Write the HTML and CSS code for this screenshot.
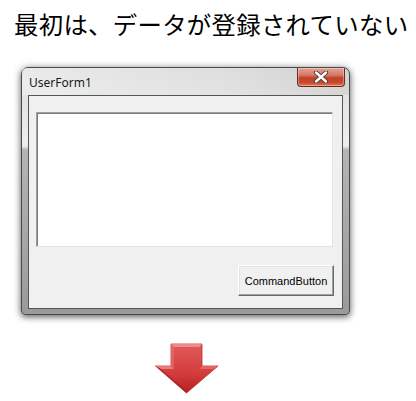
FILE: index.html
```html
<!DOCTYPE html>
<html lang="ja">
<head>
<meta charset="utf-8">
<link rel="stylesheet" href="styles.css">
</head>
<body>
<h1 class="heading">最初は、データが登録されていない</h1>
<div class="window">
  <div class="titlebar">
    <span class="caption">UserForm1</span>
    <div class="close">
      <svg width="20" height="12" viewBox="0 0 20 12">
        <path d="M5 1.5 L15 10.5 M15 1.5 L5 10.5" stroke="#3a3a3a" stroke-width="4.2" stroke-linecap="round"/>
        <path d="M5 1.5 L15 10.5 M15 1.5 L5 10.5" stroke="#ffffff" stroke-width="2.4" stroke-linecap="round"/>
      </svg>
    </div>
  </div>
  <div class="client">
    <div class="textbox"></div>
    <div class="actions">
      <div class="cmd">CommandButton</div>
    </div>
  </div>
</div>
<div class="arrow-row">
  <svg class="arrow" width="64" height="51" viewBox="0 0 64 51">
    <defs>
      <linearGradient id="ag" x1="0" y1="0" x2="0" y2="1">
        <stop offset="0" stop-color="#e25a5a"/>
        <stop offset="0.6" stop-color="#d33c3c"/>
        <stop offset="1" stop-color="#b82020"/>
      </linearGradient>
    </defs>
    <path d="M16 1 H47 V23 H63 L31.5 50 L0.5 23 H16 Z" fill="url(#ag)" stroke="#c03030" stroke-width="0.8" stroke-linejoin="round"/>
    <path d="M16 1 H47 L44 4 H19 Z" fill="#f09a9a" opacity="0.8"/>
    <path d="M0.5 23 H16 L19 26 H6 Z" fill="#f08a8a" opacity="0.8"/>
    <path d="M47 23 H63 L58 26 H44 Z" fill="#e07070" opacity="0.8"/>
    <path d="M16 1 L19 4 V26 L16 23 Z" fill="#e67575" opacity="0.6"/>
    <path d="M6 26 L31.5 48 L31.5 50 L0.5 23 Z" fill="#a01818" opacity="0.5"/>
  </svg>
</div>
</body>
</html>
```
FILE: styles.css
```css
html, body {
  margin: 0;
  padding: 0;
  background: #ffffff;
}

.heading {
  margin: 0;
  padding: 8px 0 0 14px;
  font-family: "Noto Sans CJK JP", "Noto Sans", sans-serif;
  font-weight: 400;
  font-size: 24.4px;
  letter-spacing: 0.3px;
  line-height: 32px;
  color: #000;
  white-space: nowrap;
}

.window {
  margin: 27px 0 0 21px;
  width: 329px;
  box-sizing: border-box;
  border: 1px solid #4a4a4a;
  border-radius: 7px 7px 4px 4px;
  background: linear-gradient(to bottom, #dedede 0px, #e6e6e6 40px, #eeeeee 78px, #b4b4b4 82px, #a8a8a8 160px, #9a9a9a 100%);
  box-shadow: 0 2px 6px rgba(0, 0, 0, 0.55), 0 0 10px rgba(0, 0, 0, 0.18);
  padding: 0 6px 5px 6px;
  display: flex;
  flex-direction: column;
}

.titlebar {
  height: 27px;
  display: flex;
  align-items: flex-start;
  justify-content: space-between;
  background: linear-gradient(to right, rgba(255,255,255,0.35), rgba(255,255,255,0) 60%, rgba(0,0,0,0.06));
  margin: 0 -6px;
  padding: 0 4px 0 7px;
}

.caption {
  font-family: "Noto Sans", "DejaVu Sans", sans-serif;
  font-size: 12px;
  line-height: 14px;
  color: #1a1a1a;
  margin-top: 8px;
}

.close {
  width: 48px;
  height: 19px;
  box-sizing: border-box;
  border: 1px solid #6e2a22;
  border-top: none;
  border-radius: 0 0 4px 4px;
  background: linear-gradient(to bottom, #e3a396 0%, #d57966 40%, #c0412a 55%, #c9472c 80%, #e07a4e 100%);
  display: flex;
  align-items: center;
  justify-content: center;
  box-shadow: inset 0 0 0 1px rgba(255, 255, 255, 0.35);
}

.close svg {
  display: block;
}

.client {
  height: 214px;
  box-sizing: border-box;
  background: #f0f0f0;
  border: 1px solid #555;
  padding: 16px 9px 0 7px;
  display: flex;
  flex-direction: column;
}

.textbox {
  height: 135px;
  box-sizing: border-box;
  background: #ffffff;
  border-top: 1px solid #a0a0a0;
  border-left: 1px solid #a0a0a0;
  border-right: 1px solid #e3e3e3;
  border-bottom: 1px solid #e3e3e3;
  box-shadow: inset 1px 1px 0 #7a7a7a;
}

.actions {
  display: flex;
  justify-content: flex-end;
  margin-top: 18px;
}

.cmd {
  width: 96px;
  height: 31px;
  box-sizing: border-box;
  background: #f0f0f0;
  border-top: 1px solid #ffffff;
  border-left: 1px solid #ffffff;
  border-right: 1px solid #696969;
  border-bottom: 1px solid #696969;
  box-shadow: inset -1px -1px 0 #a0a0a0, inset 1px 1px 0 #e3e3e3;
  font-family: "Liberation Sans", Arial, sans-serif;
  font-size: 11px;
  color: #000;
  display: flex;
  align-items: center;
  justify-content: center;
  margin-right: -1px;
}

.arrow-row {
  padding: 28px 0 0 155px;
}

.arrow {
  display: block;
}
```
